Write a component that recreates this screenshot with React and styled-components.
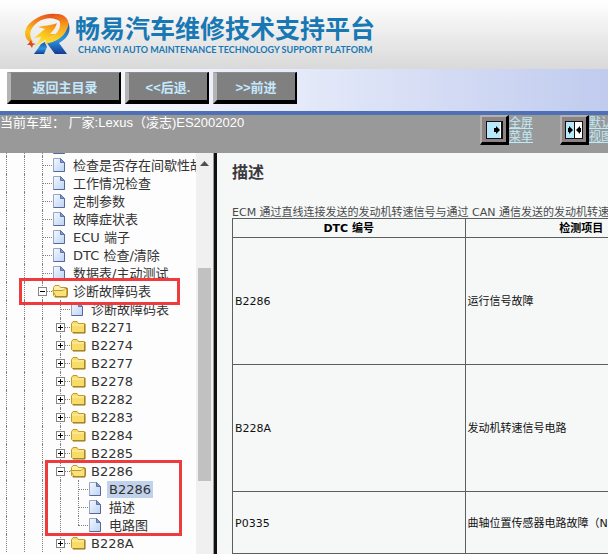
import React from 'react'
import styled, { createGlobalStyle } from 'styled-components';


let ColorBar = "#999999"
let ColorButton = "#808080"
let ColorButtonText = "#c4e9ff"
let ColorBrand = "#1878b4"
let ColorMark = "#ee3b3d"
let ColorLine = "#5c5f60"
let FontTree = "'DejaVu Sans', 'Noto Sans CJK SC', sans-serif"
let FontUi = "'Liberation Sans', 'Noto Sans CJK SC', sans-serif"

const tree = [
    { label: '' },
    { label: '检查是否存在间歇性故障' },
    { label: '工作情况检查' },
    { label: '定制参数' },
    { label: '故障症状表' },
    { label: 'ECU 端子' },
    { label: 'DTC 检查/清除' },
    { label: '数据表/主动测试' },
    {
        label: '诊断故障码表',
        open: true,
        mark: 'row',
        children: [
            { label: '诊断故障码表' },
            { label: 'B2271', folder: true },
            { label: 'B2274', folder: true },
            { label: 'B2277', folder: true },
            { label: 'B2278', folder: true },
            { label: 'B2282', folder: true },
            { label: 'B2283', folder: true },
            { label: 'B2284', folder: true },
            { label: 'B2285', folder: true },
            {
                label: 'B2286',
                open: true,
                mark: 'branch',
                children: [
                    { label: 'B2286', selected: true },
                    { label: '描述' },
                    { label: '电路图' },
                ],
            },
            { label: 'B228A', folder: true },
        ],
    },
]

const codes = [
    { code: 'B2286', item: '运行信号故障', height: 127 },
    { code: 'B228A', item: '发动机转速信号电路', height: 127 },
    { code: 'P0335', item: '曲轴位置传感器电路故障（NE 信号）', height: 62 },
]

function Logo() {
    return (
        <svg width="48" height="44" viewBox="0 0 48 44" aria-hidden="true">
            <defs>
                <linearGradient id="ring" x1="0.8" y1="0" x2="0.2" y2="1">
                    <stop offset="0" stopColor="#e2481c" />
                    <stop offset="0.4" stopColor="#f2801c" />
                    <stop offset="0.75" stopColor="#fbc41e" />
                    <stop offset="1" stopColor="#f6a01c" />
                </linearGradient>
                <linearGradient id="sweep" x1="0" y1="0" x2="0" y2="1">
                    <stop offset="0" stopColor="#e8581c" />
                    <stop offset="0.4" stopColor="#f8a01c" />
                    <stop offset="1" stopColor="#fde030" />
                </linearGradient>
                <linearGradient id="bolt" x1="0.8" y1="0" x2="0.3" y2="1">
                    <stop offset="0" stopColor="#f4861a" />
                    <stop offset="0.5" stopColor="#fbc41c" />
                    <stop offset="1" stopColor="#fde93c" />
                </linearGradient>
                <linearGradient id="leg" x1="0" y1="0" x2="0" y2="1">
                    <stop offset="0" stopColor="#1c4ea8" />
                    <stop offset="0.55" stopColor="#2c96e0" />
                    <stop offset="1" stopColor="#153a94" />
                </linearGradient>
            </defs>
            <path d="M44 9C48 18 44 25 35 30L43 41H31L22 29C33 27 42 20 44 9Z" fill="url(#leg)" />
            <path d="M17 31L21 29L23 34L20 41H10Z" fill="url(#leg)" />
            <path d="M7 30C-3 24 0 12 13 5C24-1 36 0 41 5L38 10C32 4 22 4 14 9C6 15 4 22 9 29Z" fill="url(#ring)" />
            <path d="M32 1C43 1 47 9 43 16C40 24 32 29 21 31L22 26C30 24 35 19 36 13C37 8 34 5 29 4Z" fill="url(#sweep)" />
            <path d="M14 14C20 12 27 13 33 10C32 14 29 18 26 21L32 21C25 25 18 28 11 34C14 29 16 27 17 24L10 25L21 16Z" fill="url(#bolt)" />
            <path d="M7 27L8 30L12 31L9 32L8 35L6 32L3 32L5 30Z" fill="#dc4a22" />
        </svg>
    )
}

function FileIcon() {
    return (
        <svg width="16" height="16" viewBox="0 0 16 16" aria-hidden="true">
            <defs>
                <linearGradient id="paper" x1="0" y1="0" x2="1" y2="1">
                    <stop offset="0" stopColor="#f4f9ff" />
                    <stop offset="1" stopColor="#bdd2f2" />
                </linearGradient>
            </defs>
            <path d="M1.5 1.5H8.5L12.5 5.5V14.5H1.5Z" fill="url(#paper)" stroke="#98a6c6" />
            <path d="M12.5 5.5V14.5H1.5" fill="none" stroke="#55689a" />
            <path d="M8.5 1.5V5.5H12.5Z" fill="#7f9bd0" stroke="#5c72a8" />
        </svg>
    )
}

function FolderIcon({ open }) {
    return (
        <svg width="17" height="16" viewBox="0 0 17 16" aria-hidden="true">
            <path d="M1.5 12.5V4.5L3 2.5H7L8.5 4.5H14.5V13.5H2.5Z" fill={open ? '#fbf1a8' : '#f8dc68'} stroke="#c39a28" />
            {open
                ? <path d="M0.5 7.5H11L13 5.5H15.5V12L14 13.5H4Z" fill="#fae278" stroke="#c39a28" />
                : <path d="M2 6H14" stroke="#fdf3b4" />}
            <path d="M3 14H15V5" fill="none" stroke="#94701a" />
        </svg>
    )
}

function FullIcon() {
    return (
        <svg width="17" height="18" viewBox="0 0 17 18" aria-hidden="true">
            <rect x="0.5" y="0.5" width="16" height="17" fill="#b9e8fa" stroke="#111" />
            <path d="M14.500 1V17" stroke="#fff" />
            <path d="M15.500 1V17" stroke="#111" />
            <path d="M8 7H10V5L14 9L10 13V11H8Z" fill="#000" />
        </svg>
    )
}

function SplitIcon() {
    return (
        <svg width="18" height="18" viewBox="0 0 18 18" aria-hidden="true">
            <rect x="0.5" y="0.5" width="17" height="17" fill="#fff" stroke="#111" />
            <rect x="1" y="1" width="8" height="16" fill="#b9e8fa" />
            <path d="M9.500 1V17" stroke="#111" />
            <path d="M3 7H4V5L8 9L4 13V11H3Z M16 7H15V5L11 9L15 13V11H16Z" fill="#000" />
        </svg>
    )
}

function TreeNode({ node, level, last }) {
    const folder = node.folder || node.children

    return (
        <Node>
            <Row>
                {Array.from({ length: level + 2 }, (_, i) => <Guide key={i} />)}
                <Connector $last={last}>
                    {folder && <Toggle aria-label={node.label} aria-expanded={!!node.open}>
                        <svg width="9" height="9" viewBox="0 0 9 9" aria-hidden="true">
                            <path d={node.open ? 'M2 4.5H7' : 'M2 4.5H7M4.500 2V7'} stroke="#000" />
                        </svg>
                    </Toggle>}
                </Connector>
                <IconBox>{folder ? <FolderIcon open={node.open} /> : <FileIcon />}</IconBox>
                {node.label && <NodeLink href="#" $selected={node.selected}>{node.label}</NodeLink>}
                {node.mark === 'row' && <RowMark />}
            </Row>
            {node.children && <Branch>
                {node.children.map((child, i) => (
                    <TreeNode key={i} node={child} level={level + 1} last={level > 0 && i === node.children.length - 1} />
                ))}
            </Branch>}
            {node.mark === 'branch' && <BranchMark />}
        </Node>
    )
}

function App() {
    return (
        <Page>
            <GlobalStyle />
            <Header>
                <Logo />
                <Brand>
                    <BrandName>畅易汽车维修技术支持平台</BrandName>
                    <BrandSub>CHANG YI AUTO MAINTENANCE TECHNOLOGY SUPPORT PLATFORM</BrandSub>
                </Brand>
            </Header>
            <Toolbar>
                <ToolButton $wide>返回主目录</ToolButton>
                <ToolButton>&lt;&lt;后退.</ToolButton>
                <ToolButton>&gt;&gt;前进</ToolButton>
            </Toolbar>
            <InfoBar>
                <Vehicle>当前车型： 厂家:Lexus（凌志)ES2002020</Vehicle>
                <ViewItem>
                    <ViewButton aria-label="全屏菜单"><FullIcon /></ViewButton>
                    <ViewLink href="#">全屏菜单</ViewLink>
                </ViewItem>
                <ViewItem>
                    <ViewButton aria-label="默认视图"><SplitIcon /></ViewButton>
                    <ViewLink href="#">默认视图</ViewLink>
                </ViewItem>
            </InfoBar>
            <Content>
                <Sidebar>
                    <TreePane>
                        <TreeList>
                            {tree.map((node, i) => <TreeNode key={i} node={node} level={0} />)}
                        </TreeList>
                    </TreePane>
                    <ScrollTrack>
                        <svg width="9" height="5" viewBox="0 0 9 5" aria-hidden="true">
                            <path d="M0 5L4.500 0L9 5Z" fill="#505050" />
                        </svg>
                        <ScrollThumb />
                    </ScrollTrack>
                </Sidebar>
                <Main>
                    <Title>描述</Title>
                    <Intro>ECM 通过直线连接发送的发动机转速信号与通过 CAN 通信发送的发动机转速信号不一致</Intro>
                    <Table>
                        <thead>
                            <tr>
                                <HeadCell>DTC 编号</HeadCell>
                                <HeadCell>检测项目</HeadCell>
                            </tr>
                        </thead>
                        <tbody>
                            {codes.map((row) => (
                                <CodeRow key={row.code} $height={row.height}>
                                    <Cell>{row.code}</Cell>
                                    <Cell>{row.item}</Cell>
                                </CodeRow>
                            ))}
                        </tbody>
                    </Table>
                </Main>
            </Content>
        </Page>
    )
}

export default App

const GlobalStyle = createGlobalStyle`
    * {
        box-sizing: border-box;
    }
    body {
        margin: 0;
        font-family: ${FontUi};
    }
`
const Page = styled.div`
    display: flex;
    flex-direction: column;
    height: 100vh;
    overflow: hidden;
`
const Header = styled.header`
    display: flex;
    flex-shrink: 0;
    gap: 3px;
    height: 69px;
    padding: 13px 0 0 24px;
    background: linear-gradient(#ffffff, #ececec 50%, #d9d9d9);
`
const Brand = styled.div`
    padding-top: 1px;
    color: ${ColorBrand};
    white-space: nowrap;
`
const BrandName = styled.h1`
    margin: 0;
    font-size: 25px;
    line-height: 30px;
    font-weight: bold;
`
const BrandSub = styled.p`
    margin: 0;
    padding-left: 3px;
    font-family: Lato, sans-serif;
    font-size: 9px;
    line-height: 12px;
    font-weight: bold;
`
const Toolbar = styled.nav`
    display: flex;
    flex-shrink: 0;
    gap: 4px;
    padding: 3px 7px 7px;
    background: linear-gradient(to right, #ffffff, #e8ecfa 45%, #c0cbee);
    border-bottom: 4px solid #5070b6;
`
const ToolButton = styled.button`
    width: ${(props) => (props.$wide ? 114 : 84)}px;
    height: 32px;
    padding: 0;
    background-color: ${ColorButton};
    border-style: solid;
    border-width: 1px 2px 4px 4px;
    border-color: #8c8c8c #000 #000 #b4b4b4;
    color: ${ColorButtonText};
    font-family: ${FontUi};
    font-size: 13px;
    font-weight: bold;
    cursor: pointer;
`
const InfoBar = styled.div`
    display: grid;
    flex-shrink: 0;
    grid-template-columns: minmax(480px, 1fr) 80px 80px;
    height: 38px;
    background-color: ${ColorBar};
`
const Vehicle = styled.div`
    color: #fff;
    font-size: 13px;
    line-height: 16px;
`
const ViewItem = styled.div`
    display: flex;
    align-items: flex-start;
`
const ViewButton = styled.button`
    display: flex;
    align-items: center;
    justify-content: center;
    flex-shrink: 0;
    width: 29px;
    height: 30px;
    padding: 0;
    background-color: #8c8484;
    border-style: solid;
    border-width: 2px 3px 3px 2px;
    border-color: #b4b0b0 #000 #000 #b4b0b0;
    cursor: pointer;
`
const ViewLink = styled.a`
    width: 24px;
    padding-top: 1px;
    color: #bfeaf8;
    font-size: 12px;
    line-height: 14px;
    word-break: break-all;
`
const Content = styled.div`
    display: flex;
    flex: 1;
    min-height: 0;
`
const Sidebar = styled.aside`
    display: flex;
    flex: 0 0 217px;
    min-width: 0;
    background-color: #fdfdfd;
    border-right: 3px solid #111;
`
const TreePane = styled.div`
    flex: 1;
    min-width: 0;
    overflow: hidden;
`
const TreeList = styled.ul`
    margin: -15px 0 0;
    padding: 0;
    list-style: none;
`
const Branch = styled.ul`
    margin: 0;
    padding: 0;
    list-style: none;
`
const Node = styled.li`
    position: relative;
`
const Row = styled.div`
    position: relative;
    display: flex;
    align-items: center;
    height: 18px;
    padding-left: 6px;
    font-family: ${FontTree};
    font-size: 13px;
    line-height: 16px;
    white-space: nowrap;
`
const Guide = styled.span`
    flex: 0 0 18px;
    height: 18px;
    border-left: 1px dotted #808080;
`
const Connector = styled.span`
    position: relative;
    flex: 0 0 10px;
    height: 18px;

    &::before {
        content: '';
        position: absolute;
        left: 0;
        top: 0;
        height: ${(props) => (props.$last ? 9 : 18)}px;
        border-left: 1px dotted #808080;
    }
    &::after {
        content: '';
        position: absolute;
        left: 0;
        top: 9px;
        width: 10px;
        border-top: 1px dotted #808080;
    }
`
const Toggle = styled.button`
    position: absolute;
    z-index: 1;
    left: -4px;
    top: 5px;
    width: 9px;
    height: 9px;
    padding: 0;
    background-color: #fff;
    border: 1px solid #848484;
    cursor: pointer;

    svg {
        display: block;
        margin: -1px;
    }
`
const IconBox = styled.span`
    display: flex;
    flex: 0 0 18px;
`
const NodeLink = styled.a`
    margin-left: 1px;
    padding: 1px 2px 0;
    background-color: ${(props) => (props.$selected ? '#c0d2ec' : 'transparent')};
    color: #333;
    text-decoration: none;

    &:hover{
        text-decoration: underline;
    }
`
const RowMark = styled.span`
    position: absolute;
    z-index: 2;
    top: -4px;
    bottom: -5px;
    left: 19px;
    width: 161px;
    border: 3px solid ${ColorMark};
    pointer-events: none;
`
const BranchMark = styled.span`
    position: absolute;
    z-index: 2;
    top: -2px;
    bottom: -2px;
    left: 45px;
    width: 137px;
    border: 3px solid ${ColorMark};
    pointer-events: none;
`
const ScrollTrack = styled.div`
    display: flex;
    flex-direction: column;
    align-items: center;
    gap: 102px;
    flex: 0 0 18px;
    padding-top: 8px;
    background-color: #f0f0f0;
    border-right: 1px solid #999;
`
const ScrollThumb = styled.div`
    width: 13px;
    height: 213px;
    background-color: #c1c1c1;
`
const Main = styled.main`
    flex: 1;
    min-width: 0;
    overflow: hidden;
    padding: 9px 0 0 15px;
    background-color: #f6f8f8;
    font-family: ${FontTree};
    font-size: 11px;
`
const Title = styled.h2`
    margin: 0 0 24px;
    color: #3a3a3e;
    font-size: 16px;
    line-height: 22px;
`
const Intro = styled.p`
    margin: 0;
    color: #4a4a4a;
    line-height: 10px;
    white-space: nowrap;
`
const Table = styled.table`
    width: 100%;
    min-width: 466px;
    table-layout: fixed;
    border-collapse: collapse;
    color: #111;
`
const HeadCell = styled.th`
    height: 18px;
    padding: 2px 2px 0;
    border: 1px solid ${ColorLine};
    color: #000;
    line-height: 16px;
`
const CodeRow = styled.tr`
    height: ${(props) => props.$height}px;
`
const Cell = styled.td`
    padding: 2px 2px 0;
    border: 1px solid ${ColorLine};
    line-height: 16px;
    white-space: nowrap;
`
